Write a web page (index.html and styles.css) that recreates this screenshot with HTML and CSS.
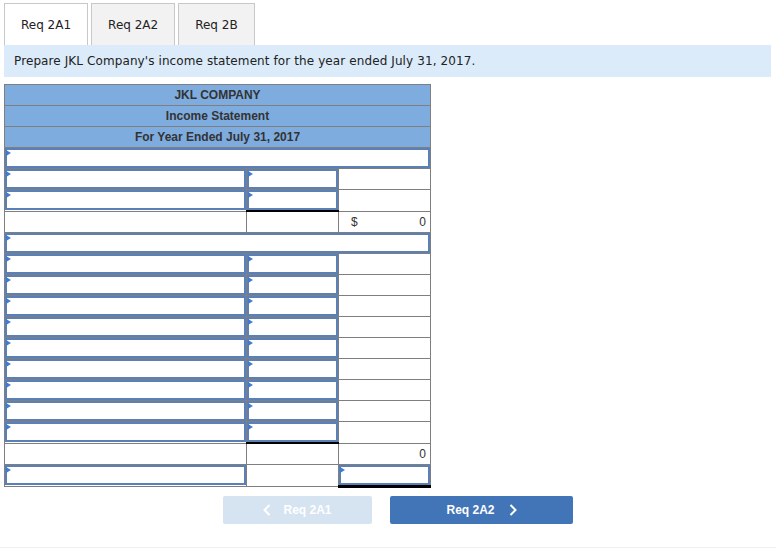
FILE: index.html
```html
<!DOCTYPE html>
<html>
<head>
<meta charset="utf-8">
<link rel="stylesheet" href="styles.css">
</head>
<body>
<div class="page">
  <div class="tabs">
    <div class="tab active">Req 2A1</div>
    <div class="tab">Req 2A2</div>
    <div class="tab">Req 2B</div>
  </div>
  <div class="instr">Prepare JKL Company's income statement for the year ended July 31, 2017.</div>

  <table class="sheet">
    <colgroup><col class="c1"><col class="c2"><col class="c3"></colgroup>
    <tr class="hd"><td colspan="3">JKL COMPANY</td></tr>
    <tr class="hd"><td colspan="3">Income Statement</td></tr>
    <tr class="hd"><td colspan="3">For Year Ended July 31, 2017</td></tr>

    <tr><td colspan="3" class="in"><div class="box"></div></td></tr>
    <tr><td class="in"><div class="box"></div></td><td class="in"><div class="box"></div></td><td></td></tr>
    <tr><td class="in"><div class="box"></div></td><td class="in"><div class="box"></div></td><td></td></tr>
    <tr><td></td><td class="sum"></td><td><div class="amt"><span>$</span><span>0</span></div></td></tr>

    <tr><td colspan="3" class="in"><div class="box"></div></td></tr>
    <tr><td class="in"><div class="box"></div></td><td class="in"><div class="box"></div></td><td></td></tr>
    <tr><td class="in"><div class="box"></div></td><td class="in"><div class="box"></div></td><td></td></tr>
    <tr><td class="in"><div class="box"></div></td><td class="in"><div class="box"></div></td><td></td></tr>
    <tr><td class="in"><div class="box"></div></td><td class="in"><div class="box"></div></td><td></td></tr>
    <tr><td class="in"><div class="box"></div></td><td class="in"><div class="box"></div></td><td></td></tr>
    <tr><td class="in"><div class="box"></div></td><td class="in"><div class="box"></div></td><td></td></tr>
    <tr><td class="in"><div class="box"></div></td><td class="in"><div class="box"></div></td><td></td></tr>
    <tr><td class="in"><div class="box"></div></td><td class="in"><div class="box"></div></td><td></td></tr>
    <tr><td class="in"><div class="box"></div></td><td class="in"><div class="box"></div></td><td></td></tr>
    <tr><td></td><td class="sum"></td><td><div class="amt right"><span>0</span></div></td></tr>
    <tr><td class="in"><div class="box"></div></td><td></td><td class="in total"><div class="box"></div></td></tr>
  </table>

  <div class="nav">
    <div class="btn prev"><svg class="chev l" width="8" height="12" viewBox="0 0 8 12"><path d="M6.5 1 L1.5 6 L6.5 11" fill="none" stroke="#fff" stroke-width="2"/></svg>Req 2A1</div>
    <div class="btn next">Req 2A2<svg class="chev r" width="8" height="12" viewBox="0 0 8 12"><path d="M1.5 1 L6.5 6 L1.5 11" fill="none" stroke="#fff" stroke-width="2"/></svg></div>
  </div>
</div>
<div class="foot"></div>
</body>
</html>
```

FILE: styles.css
```css
html, body {
  margin: 0;
  padding: 0;
  background: #fff;
}
body {
  width: 776px;
  height: 550px;
  overflow: hidden;
  font-family: "Liberation Sans", Arial, sans-serif;
  color: #333;
}
.page {
  padding: 3px 5px 0 4px;
}
.tabs {
  display: flex;
  gap: 3px;
  height: 42px;
}
.tab {
  box-sizing: border-box;
  height: 42px;
  border: 1px solid #c8c8c8;
  border-bottom: none;
  background: #f2f2f2;
  font-family: "DejaVu Sans", Verdana, sans-serif;
  font-size: 12px;
  color: #222;
  display: flex;
  align-items: center;
  justify-content: center;
  padding: 0 16px;
}
.tab.active {
  background: #fff;
}
.instr {
  height: 32px;
  background: #dcebf9;
  font-family: "DejaVu Sans", Verdana, sans-serif;
  font-size: 12px;
  letter-spacing: 0.1px;
  color: #222;
  display: flex;
  align-items: center;
  padding-left: 10px;
}
.sheet {
  margin-top: 7px;
  border-collapse: collapse;
  table-layout: fixed;
  width: 426px;
}
.c1 { width: 242px; }
.c2 { width: 92px; }
.c3 { width: 92px; }
.sheet td {
  border: 1px solid #7f7f7f;
  padding: 0;
  height: 20px;
  font-size: 12px;
}
.sheet tr.hd td {
  background: #7facdf;
  font-weight: bold;
  text-align: center;
  color: #333;
}
.sheet td.in {
  vertical-align: top;
}
.box {
  position: relative;
  box-sizing: border-box;
  height: 20px;
  border: 2px solid #5b80b8;
  background: #fff;
}
.box::before {
  content: "";
  position: absolute;
  left: -1px;
  top: 0;
  border-left: 5px solid #3f7bd0;
  border-top: 3px solid transparent;
  border-bottom: 3px solid transparent;
}
.sheet td.sum {
  border-top: 2px solid #000;
}
.sheet td.total {
  border-bottom: 3px solid #000;
}
.amt {
  display: flex;
  justify-content: space-between;
  padding: 0 4px 0 12px;
  font-size: 12px;
  color: #333;
}
.amt.right {
  justify-content: flex-end;
}
.nav {
  display: flex;
  gap: 18px;
  margin-top: 8px;
  margin-left: 219px;
}
.btn {
  height: 28px;
  border-radius: 2px;
  display: flex;
  align-items: center;
  justify-content: center;
  font-weight: bold;
  font-size: 12px;
  color: #fff;
}
.btn.prev {
  width: 149px;
  background: #d6e3f1;
}
.btn.next {
  width: 183px;
  background: #4274b8;
}
.chev.l { margin-right: 12px; }
.chev.r { margin-left: 14px; }
.foot {
  position: absolute;
  left: 0;
  top: 547px;
  width: 776px;
  border-top: 1px solid #eeeeee;
}
```
